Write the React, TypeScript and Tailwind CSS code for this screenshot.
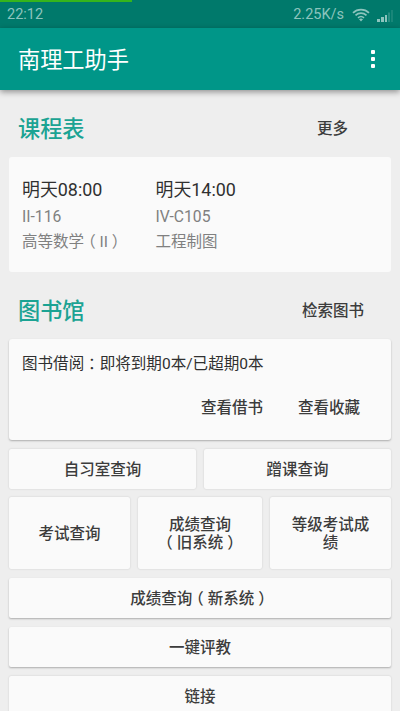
import type { ReactNode } from "react";

// ─── Data ────────────────────────────────────────────────────────────────────

const LESSONS = [
  { time: "明天08:00", room: "II-116", name: "高等数学（II）" },
  { time: "明天14:00", room: "IV-C105", name: "工程制图" },
];

// ─── App ─────────────────────────────────────────────────────────────────────

export default function App() {
  return (
    <div className="flex h-[711px] w-[400px] flex-col overflow-hidden bg-[#eeeeee] font-[Roboto,'Noto_Sans_CJK_SC',sans-serif] text-[#3c3c3c]">
      <StatusBar />

      {/* Toolbar */}
      <header className="flex h-[62px] shrink-0 items-center justify-between bg-[#009688] pr-[25px] pl-[18px] shadow-[0_2px_6px_rgba(0,0,0,0.4)]">
        <h1 className="pt-[2px] text-[22.2px] leading-none text-white">南理工助手</h1>
        <div className="flex flex-col gap-[3px]" aria-label="菜单">
          <span className="size-1 rounded-[1px] bg-white" />
          <span className="size-1 rounded-[1px] bg-white" />
          <span className="size-1 rounded-[1px] bg-white" />
        </div>
      </header>

      <main className="flex shrink-0 flex-col px-[9px]">
        <SectionHeader title="课程表" action="更多" className="h-[67px] pt-[12px] pr-[43px]" />
        <section className="flex h-[115px] rounded-[3px] bg-[#fafafa] px-[13px] pt-[20px]">
          {LESSONS.map((lesson) => (
            <div key={lesson.time} className="w-[133.5px] shrink-0 whitespace-nowrap">
              <p className="text-[17.9px] leading-[26px] text-[#303030]">{lesson.time}</p>
              <p className="text-[15.7px] leading-[28px] text-[#808080]">{lesson.room}</p>
              <p className="text-[15.5px] leading-[22px] text-[#808080]">
                <Label text={lesson.name} />
              </p>
            </div>
          ))}
        </section>

        <SectionHeader title="图书馆" action="检索图书" className="h-[67px] pt-[12px] pr-[27px]" />
        <section className="flex h-[101px] flex-col justify-between rounded-[3px] bg-[#fafafa] px-[13px] pt-[14px] pb-[21px] text-[15.5px] leading-[22px] shadow-[0_1px_2px_rgba(0,0,0,0.28)]">
          <p className="text-[15.55px] text-[#303030]">
            <Label text="图书借阅：即将到期0本/已超期0本" />
          </p>
          <div className="flex justify-end gap-[35px] pr-[18px] font-medium">
            <button type="button">查看借书</button>
            <button type="button">查看收藏</button>
          </div>
        </section>

        <div className="mt-[9px] grid grid-cols-2 gap-2">
          <Tile className="h-10">自习室查询</Tile>
          <Tile className="h-10">蹭课查询</Tile>
        </div>
        <div className="mt-2 grid grid-cols-[121px_124px_121px] gap-2">
          <Tile className="h-[72px]">考试查询</Tile>
          <Tile className="h-[72px]">
            成绩查询
            <br />
            <Label text="（旧系统）" />
          </Tile>
          <Tile className="h-[72px] px-5">等级考试成绩</Tile>
        </div>
        <Tile className="mt-[9px] h-10 shadow-[0_1px_2px_rgba(0,0,0,0.28)]">
          <Label text="成绩查询（新系统）" />
        </Tile>
        <Tile className="mt-[9px] h-10 shadow-[0_1px_2px_rgba(0,0,0,0.28)]">一键评教</Tile>
        <Tile className="mt-[9px] h-10">链接</Tile>
      </main>
    </div>
  );
}

// ─── Sub-components ──────────────────────────────────────────────────────────

function StatusBar() {
  return (
    <div className="flex h-7 shrink-0 flex-col bg-[#00796b]">
      <div className="h-[2px] w-[132px] bg-[#36b51c]" />
      <div className="flex flex-1 items-center justify-between pt-px pr-[7px] pl-[7px] text-[14.5px] leading-none text-[#8cc4bd]">
        <span>22:12</span>
        <div className="flex items-center">
          <span>2.25K/s</span>
          <WifiIcon />
          <SignalIcon />
        </div>
      </div>
    </div>
  );
}

function SectionHeader({ title, action, className }: { title: string; action: string; className: string }) {
  return (
    <div className={`flex items-center justify-between pl-[9px] ${className}`}>
      <h2 className="text-[22.2px] leading-none font-medium text-[#1ba393]">{title}</h2>
      <button type="button" className="text-[15.5px] leading-none font-medium">
        {action}
      </button>
    </div>
  );
}

function Tile({ className, children }: { className: string; children: ReactNode }) {
  return (
    <button
      type="button"
      className={`rounded-[2px] bg-[#fafafa] pt-[2px] text-[15.5px] leading-[18.5px] font-medium shadow-[0_0_2px_rgba(0,0,0,0.16)] ${className}`}
    >
      {children}
    </button>
  );
}

// Centres full-width punctuation inside its em box
function Label({ text }: { text: string }) {
  return text.split(/([（）：])/).map((part, i) =>
    /[（）：]/.test(part) ? (
      <span key={i} className="px-[0.25em] [font-feature-settings:'halt']">
        {part}
      </span>
    ) : (
      part
    )
  );
}

function WifiIcon() {
  return (
    <svg className="mb-[2px] ml-[8px]" width="18" height="14" viewBox="0 0 18 14" fill="none" aria-hidden="true">
      <path d="M1 4.8C5.5 0.5 12.5 0.5 17 4.8" stroke="currentColor" strokeWidth="1.7" />
      <path d="M3.5 7.4C6.7 4.4 11.3 4.4 14.5 7.4" stroke="currentColor" strokeWidth="1.7" />
      <path d="M6 9.8C7.8 8.2 10.2 8.2 12 9.8" stroke="currentColor" strokeWidth="1.6" />
      <path d="M7 11.2C8.2 10.3 9.8 10.3 11 11.2L9 13.5Z" fill="currentColor" />
    </svg>
  );
}

function SignalIcon() {
  return (
    <svg className="ml-[7px]" width="16" height="12" viewBox="0 0 16 12" fill="currentColor" aria-hidden="true">
      <rect x="0" y="9" width="3" height="3" />
      <rect x="4" y="7" width="3" height="5" />
      <rect x="8" y="5" width="2" height="7" />
      <rect x="11" y="2.5" width="2" height="9.5" opacity="0.3" />
      <rect x="14" y="0" width="2" height="12" opacity="0.18" />
    </svg>
  );
}
